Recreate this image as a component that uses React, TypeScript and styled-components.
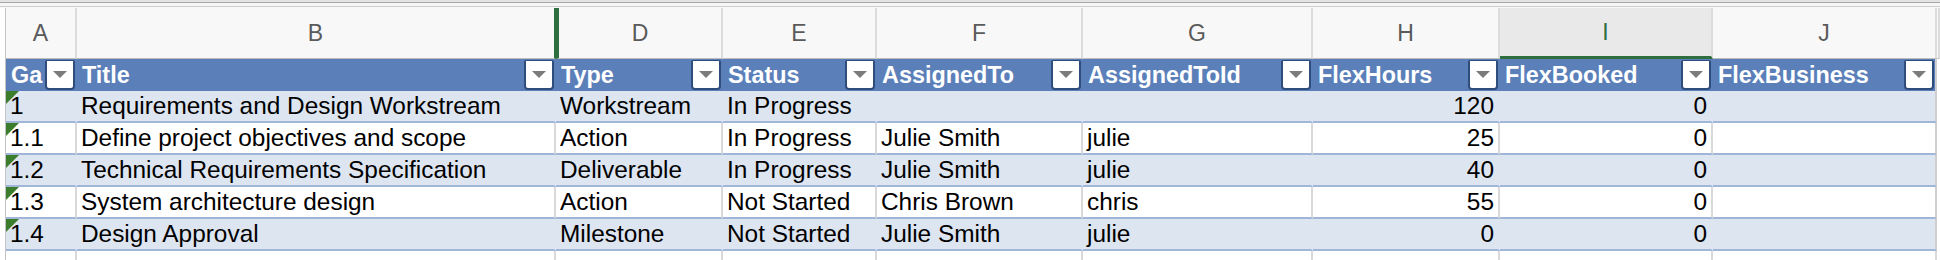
import React from 'react';
import styled, { createGlobalStyle } from 'styled-components';

// column widths: row header, A, B, D, E, F, G, H, I, J, rest
const COLS = '6px 71px 479px 167px 154px 206px 230px 187px 213px 224px 1fr';

const BLUE = '#5b7fb9';
const BAND = '#dde5f0';
const ROW_LINE = '#9fb6d9';
const GRID = '#d9d9d9';
const GREEN = '#2f6e3e';

type Task = {
    id: string;
    title: string;
    type: string;
    status: string;
    assignedTo: string;
    assignedToId: string;
    hours: string;
    booked: string;
    business: string;
};

const tasks: Task[] = [
    { id: '1', title: 'Requirements and Design Workstream', type: 'Workstream', status: 'In Progress', assignedTo: '', assignedToId: '', hours: '120', booked: '0', business: '' },
    { id: '1.1', title: 'Define project objectives and scope', type: 'Action', status: 'In Progress', assignedTo: 'Julie Smith', assignedToId: 'julie', hours: '25', booked: '0', business: '' },
    { id: '1.2', title: 'Technical Requirements Specification', type: 'Deliverable', status: 'In Progress', assignedTo: 'Julie Smith', assignedToId: 'julie', hours: '40', booked: '0', business: '' },
    { id: '1.3', title: 'System architecture design', type: 'Action', status: 'Not Started', assignedTo: 'Chris Brown', assignedToId: 'chris', hours: '55', booked: '0', business: '' },
    { id: '1.4', title: 'Design Approval', type: 'Milestone', status: 'Not Started', assignedTo: 'Julie Smith', assignedToId: 'julie', hours: '0', booked: '0', business: '' },
];

const letters = ['A', 'B', 'D', 'E', 'F', 'G', 'H', 'I', 'J'];
const headers = ['Gantt', 'Title', 'Type', 'Status', 'AssignedTo', 'AssignedToId', 'FlexHours', 'FlexBooked', 'FlexBusiness'];

const App = () => {
    return (
        <Sheet>
            <GlobalStyle />
            <TopStrip />
            <Row $height={51}>
                <Corner />
                {letters.map((l) => (
                    <LetterCell
                        key={l}
                        $selected={l === 'I'}
                        $greenRight={l === 'B'}
                        $greenLeft={l === 'D'}
                    >
                        {l}
                    </LetterCell>
                ))}
                <LetterCell />
            </Row>
            <Row $height={32}>
                <Corner />
                {headers.map((h, i) => (
                    <HeaderCell key={h} $edge={i === headers.length - 1}>
                        <HeaderLabel>{h}</HeaderLabel>
                        <FilterButton>
                            <Caret />
                        </FilterButton>
                    </HeaderCell>
                ))}
                <Filler />
            </Row>
            {tasks.map((t, i) => {
                const band = i % 2 === 0;
                return (
                    <Row key={t.id} $height={32}>
                        <Corner />
                        <DataCell $band={band} $flag>{t.id}</DataCell>
                        <DataCell $band={band}>{t.title}</DataCell>
                        <DataCell $band={band}>{t.type}</DataCell>
                        <DataCell $band={band}>{t.status}</DataCell>
                        <DataCell $band={band}>{t.assignedTo}</DataCell>
                        <DataCell $band={band}>{t.assignedToId}</DataCell>
                        <DataCell $band={band} $num>{t.hours}</DataCell>
                        <DataCell $band={band} $num>{t.booked}</DataCell>
                        <DataCell $band={band} $edge>{t.business}</DataCell>
                        <Filler />
                    </Row>
                );
            })}
            <Row $height={20}>
                <Corner />
                {letters.map((l) => (
                    <EmptyCell key={l} />
                ))}
                <Filler />
            </Row>
        </Sheet>
    );
};

const GlobalStyle = createGlobalStyle`
    html, body {
        margin: 0;
        padding: 0;
        background: #fff;
    }
    body {
        width: 1940px;
        height: 260px;
        overflow: hidden;
        font-family: 'Liberation Sans', Arial, sans-serif;
    }
`;

const Sheet = styled.div`
    width: 1940px;
    display: flex;
    flex-direction: column;
`;

const TopStrip = styled.div`
    height: 8px;
    background: linear-gradient(#e4e4e4 0 2px, #a9a9a9 2px 3px, #f6f6f6 3px 6px, #cfcfcf 6px 7px, #f8f8f8 7px);
`;

const Row = styled.div<{ $height: number }>`
    display: grid;
    grid-template-columns: ${COLS};
    height: ${({ $height }) => $height}px;
`;

const Corner = styled.div`
    box-sizing: border-box;
    background: #fff;
    border-right: 1px solid #c4c4c4;
`;

const LetterCell = styled.div<{ $selected?: boolean; $greenLeft?: boolean; $greenRight?: boolean }>`
    box-sizing: border-box;
    display: flex;
    align-items: center;
    justify-content: center;
    background: ${({ $selected }) => ($selected ? '#e9e9e9' : '#f8f8f8')};
    color: ${({ $selected }) => ($selected ? GREEN : '#5a5a5a')};
    font-size: 23px;
    border-right: 2px solid ${({ $greenRight }) => ($greenRight ? GREEN : '#dcdcdc')};
    border-left: ${({ $greenLeft }) => ($greenLeft ? `3px solid ${GREEN}` : 'none')};
    border-bottom: ${({ $selected }) => ($selected ? `3px solid ${GREEN}` : '1px solid #bdbdbd')};
`;

const HeaderCell = styled.div<{ $edge?: boolean }>`
    box-sizing: border-box;
    display: flex;
    align-items: center;
    gap: 2px;
    background: ${BLUE};
    padding: 0 1px 0 5px;
    border-right: ${({ $edge }) => ($edge ? `2px solid #cfcfcf` : `1px solid ${BLUE}`)};
    min-width: 0;
`;

const HeaderLabel = styled.div`
    flex: 1;
    min-width: 0;
    overflow: hidden;
    white-space: nowrap;
    color: #fff;
    font-size: 23.4px;
    font-weight: bold;
    line-height: 32px;
`;

const FilterButton = styled.div`
    box-sizing: border-box;
    flex: 0 0 30px;
    height: 30px;
    display: flex;
    align-items: center;
    justify-content: center;
    background: #fff;
    border: 2px solid #2e4c7c;
    border-top-width: 1px;
    border-radius: 2px 2px 4px 4px;
`;

const Caret = styled.div`
    width: 0;
    height: 0;
    border-left: 7px solid transparent;
    border-right: 7px solid transparent;
    border-top: 7px solid #7b7b7b;
`;

const DataCell = styled.div<{ $band: boolean; $num?: boolean; $edge?: boolean; $flag?: boolean }>`
    box-sizing: border-box;
    position: relative;
    background: ${({ $band }) => ($band ? BAND : '#fff')};
    border-bottom: 2px solid ${ROW_LINE};
    border-right: 2px solid ${({ $band, $edge }) => ($edge ? '#cfcfcf' : $band ? BAND : GRID)};
    padding: 0 4px;
    font-size: 24.4px;
    line-height: 30px;
    color: #000;
    text-align: ${({ $num }) => ($num ? 'right' : 'left')};
    white-space: nowrap;
    overflow: hidden;

    ${({ $flag }) =>
        $flag &&
        `
        &::before {
            content: '';
            position: absolute;
            top: 0;
            left: 0;
            width: 0;
            height: 0;
            border-top: 13px solid #3b7d2a;
            border-right: 13px solid transparent;
        }
    `}
`;

const EmptyCell = styled.div`
    box-sizing: border-box;
    background: #fff;
    border-right: 2px solid ${GRID};
`;

const Filler = styled.div`
    background: #fff;
`;

export default App;
